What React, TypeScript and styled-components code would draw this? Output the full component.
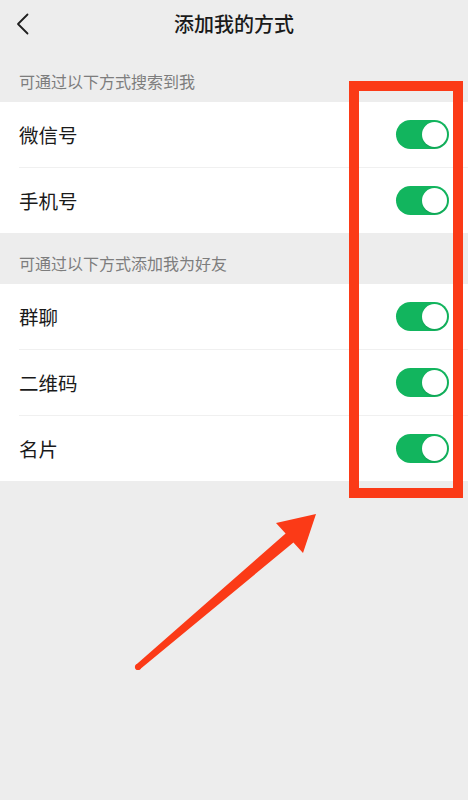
import React, { useState } from 'react';
import styled, { createGlobalStyle } from 'styled-components';

const GlobalStyle = createGlobalStyle`
  html, body {
    margin: 0;
    padding: 0;
    background: #ededed;
  }
  body {
    font-family: "Noto Sans CJK SC", "Noto Sans", sans-serif;
    -webkit-font-smoothing: antialiased;
  }
`;

type Item = { key: string; label: string };

const searchItems: Item[] = [
  { key: 'wechat', label: '微信号' },
  { key: 'phone', label: '手机号' },
];

const addItems: Item[] = [
  { key: 'group', label: '群聊' },
  { key: 'qr', label: '二维码' },
  { key: 'card', label: '名片' },
];

const App: React.FC = () => {
  const [state, setState] = useState<Record<string, boolean>>({
    wechat: true,
    phone: true,
    group: true,
    qr: true,
    card: true,
  });

  const toggle = (key: string) => {
    setState(prev => ({ ...prev, [key]: !prev[key] }));
  };

  const renderGroup = (items: Item[]) => (
    <Group>
      {items.map(item => (
        <Row key={item.key}>
          <RowLabel>{item.label}</RowLabel>
          <Switch $on={state[item.key]} onClick={() => toggle(item.key)}>
            <Knob $on={state[item.key]} />
          </Switch>
        </Row>
      ))}
    </Group>
  );

  return (
    <>
      <GlobalStyle />
      <Screen>
        <Header>
          <BackButton aria-label="返回">
            <svg width="14" height="22" viewBox="0 0 14 22" fill="none">
              <path d="M11.5 1.5 L2 11 L11.5 20.5" stroke="#1f1f1f" strokeWidth="1.8" strokeLinecap="round" strokeLinejoin="round" />
            </svg>
          </BackButton>
          <Title>添加我的方式</Title>
        </Header>

        <SectionLabel>可通过以下方式搜索到我</SectionLabel>
        {renderGroup(searchItems)}

        <SectionLabel>可通过以下方式添加我为好友</SectionLabel>
        {renderGroup(addItems)}

        <Highlight />
        <Arrow width="468" height="800" viewBox="0 0 468 800">
          <polygon
            fill="#fb3a17"
            points="136,664.7 285.6,533.5 276,523 316,514 303,553 293.4,542.5 140,669.3"
          />
          <circle cx="138" cy="667" r="3.1" fill="#fb3a17" />
        </Arrow>
      </Screen>
    </>
  );
};

export default App;

const Screen = styled.div`
  position: relative;
  min-height: 800px;
  background: #ededed;
  overflow: hidden;
`;

const Header = styled.div`
  position: relative;
  height: 51px;
  display: flex;
  align-items: center;
  justify-content: center;
  padding-bottom: 3px;
  box-sizing: border-box;
`;

const BackButton = styled.button`
  position: absolute;
  left: 13px;
  top: 12px;
  border: none;
  background: none;
  padding: 0;
  width: 20px;
  height: 24px;
  display: flex;
  align-items: center;
  justify-content: center;
`;

const Title = styled.h1`
  margin: 0;
  font-size: 20px;
  font-weight: 500;
  color: #1a1a1a;
  line-height: 28px;
`;

const SectionLabel = styled.div`
  padding: 20px 19px 11px;
  font-size: 16px;
  line-height: 20px;
  color: #7d7d7d;
`;

const Group = styled.div`
  background: #fff;
`;

const Row = styled.div`
  margin-left: 19px;
  padding-right: 19px;
  height: 65px;
  display: flex;
  align-items: center;
  justify-content: space-between;

  & + & {
    border-top: 1px solid #f0f0f0;
  }
`;

const RowLabel = styled.span`
  font-size: 19.5px;
  color: #1a1a1a;
  line-height: 26px;
`;

const Switch = styled.button<{ $on: boolean }>`
  width: 53px;
  height: 29px;
  border-radius: 15px;
  border: none;
  padding: 2px;
  display: flex;
  justify-content: ${p => (p.$on ? 'flex-end' : 'flex-start')};
  background: ${p => (p.$on ? '#12b55e' : '#e5e5e5')};
  cursor: pointer;
  box-sizing: border-box;
`;

const Knob = styled.span<{ $on: boolean }>`
  width: 25px;
  height: 25px;
  border-radius: 50%;
  background: #fff;
  box-shadow: 0 1px 2px rgba(0, 0, 0, 0.12);
`;

const Highlight = styled.div`
  position: absolute;
  left: 349px;
  top: 81px;
  width: 114px;
  height: 417px;
  border: 10.5px solid #fb3a17;
  box-sizing: border-box;
  pointer-events: none;
`;

const Arrow = styled.svg`
  position: absolute;
  left: 0;
  top: 0;
  pointer-events: none;
`;
